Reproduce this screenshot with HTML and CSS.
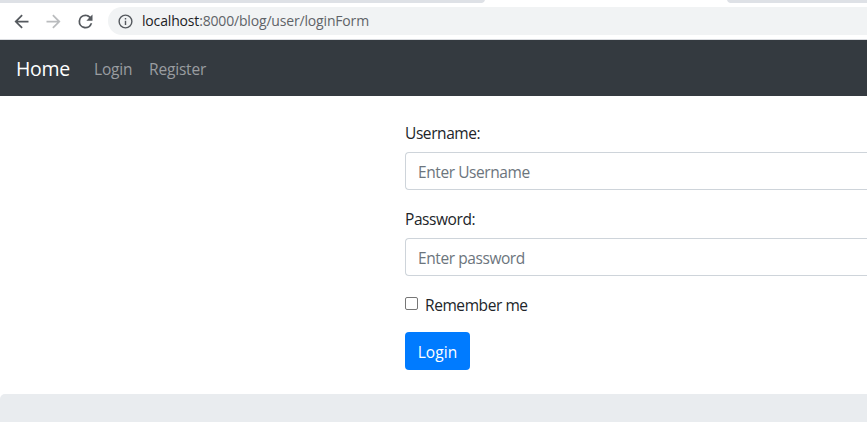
FILE: index.html
```html
<!DOCTYPE html>
<html lang="en">
<head>
<meta charset="utf-8">
<title>Login</title>
<link rel="stylesheet" href="styles.css">
</head>
<body>
<div class="browser">
  <div class="tabs"><span class="tab-left"></span><span class="tab-active"></span><span class="tab-right"></span></div>
  <div class="toolbar">
    <svg class="icon" viewBox="0 0 24 24"><path d="M20 11H7.83l5.59-5.59L12 4l-8 8 8 8 1.41-1.41L7.83 13H20z"/></svg>
    <svg class="icon muted" viewBox="0 0 24 24"><path d="M12 4l-1.41 1.41L16.17 11H4v2h12.17l-5.58 5.59L12 20l8-8z"/></svg>
    <svg class="icon" viewBox="0 0 24 24"><path d="M17.65 6.35A7.96 7.96 0 0 0 12 4a8 8 0 1 0 7.73 10h-2.08A6 6 0 1 1 12 6c1.66 0 3.14.69 4.22 1.78L13 11h7V4z"/></svg>
    <div class="address">
      <svg class="info" viewBox="0 0 24 24"><path d="M11 17h2v-6h-2zm1-15a10 10 0 1 0 0 20 10 10 0 0 0 0-20zm0 18a8 8 0 1 1 0-16 8 8 0 0 1 0 16zM11 9h2V7h-2z"/></svg>
      <span class="url"><span class="host">localhost</span>:8000/blog/user/loginForm</span>
    </div>
  </div>
</div>
<nav class="navbar">
  <a class="brand">Home</a>
  <a class="nav-link nav-login">Login</a>
  <a class="nav-link nav-register">Register</a>
</nav>
<form class="login-form">
  <label class="label label-user" for="username">Username:</label>
  <input class="control control-user" id="username" type="text" placeholder="Enter Username">
  <label class="label label-pass" for="password">Password:</label>
  <input class="control control-pass" id="password" type="password" placeholder="Enter password">
  <label class="remember"><input class="check" type="checkbox"><span class="remember-text">Remember me</span></label>
  <button class="button" type="button">Login</button>
</form>
<footer class="footer"></footer>
</body>
</html>
```
FILE: styles.css
```css
* { box-sizing: border-box; }
body {
  display: flex;
  flex-direction: column;
  margin: 0;
  height: 422px;
  overflow: hidden;
  background: #fff;
  color: #212529;
  font: 15.5px/24px "Open Sans", "Noto Sans", sans-serif;
}
.browser { height: 40px; border-bottom: 1px solid #dadce0; }
.tabs { display: flex; height: 3px; background: #dee1e6; }
.tab-left { width: 482px; }
.tab-active { width: 248px; background: #fff; clip-path: polygon(3px 0, 245px 0, 246px 2px, 248px 3px, 0 3px, 2px 2px); }
.toolbar { display: flex; align-items: center; height: 36px; padding-left: 11px; }
.icon { width: 21px; height: 21px; margin-right: 11px; fill: #55595e; }
.muted { fill: #babcbe; }
.address {
  display: flex;
  align-items: center;
  flex: 1;
  height: 28px;
  margin-left: 1px;
  padding-left: 9px;
  border-radius: 14px 0 0 14px;
  background: #f1f3f4;
}
.info { width: 17px; height: 17px; margin-right: 8px; fill: #55595e; }
.url { color: #5f6368; font-size: 14px; line-height: 20px; letter-spacing: -.17px; white-space: nowrap; }
.host { color: #202124; }
.navbar { display: flex; align-items: center; height: 56px; padding: 0 16px; background: #343a40; }
.brand { width: 78px; padding-top: 1px; color: #fff; font-size: 19.5px; line-height: 30px; letter-spacing: -.3px; }
.nav-link { padding-top: 2px; color: #9a9da0; letter-spacing: -.18px; }
.nav-login { width: 55px; }
.login-form { display: flex; flex-direction: column; align-items: flex-start; margin-left: 405px; padding-top: 24px; letter-spacing: -.42px; }
.label { height: 24px; margin-bottom: 8px; padding-top: 1px; line-height: 23px; line-height: 24px; }
.control {
  align-self: stretch;
  height: 38px;
  margin: 0 0 16px;
  padding: 7px 12px 5px;
  border: 1px solid #ced4da;
  border-right: 0;
  border-radius: 4px 0 0 4px;
  background: #fff;
  font: inherit;
  letter-spacing: inherit;
}
.control::placeholder { color: #6c757d; opacity: 1; }
.remember { display: flex; height: 24px; margin-bottom: 16px; }
.remember-text { padding-top: 1px; }
.check {
  appearance: none;
  width: 13px;
  height: 13px;
  margin: 5px 7px 0 0;
  border: 1px solid #767676;
  border-radius: 2px;
  background: #fff;
}
.button {
  width: 65px;
  height: 38px;
  padding: 2px 0 0;
  border: 0;
  border-radius: 4px;
  background: #007bff;
  color: #fff;
  font: inherit;
  letter-spacing: .1px;
}
.footer { flex: 1; margin-top: 24px; border-radius: 5px 0 0 0; background: #e9ecef; }
```
